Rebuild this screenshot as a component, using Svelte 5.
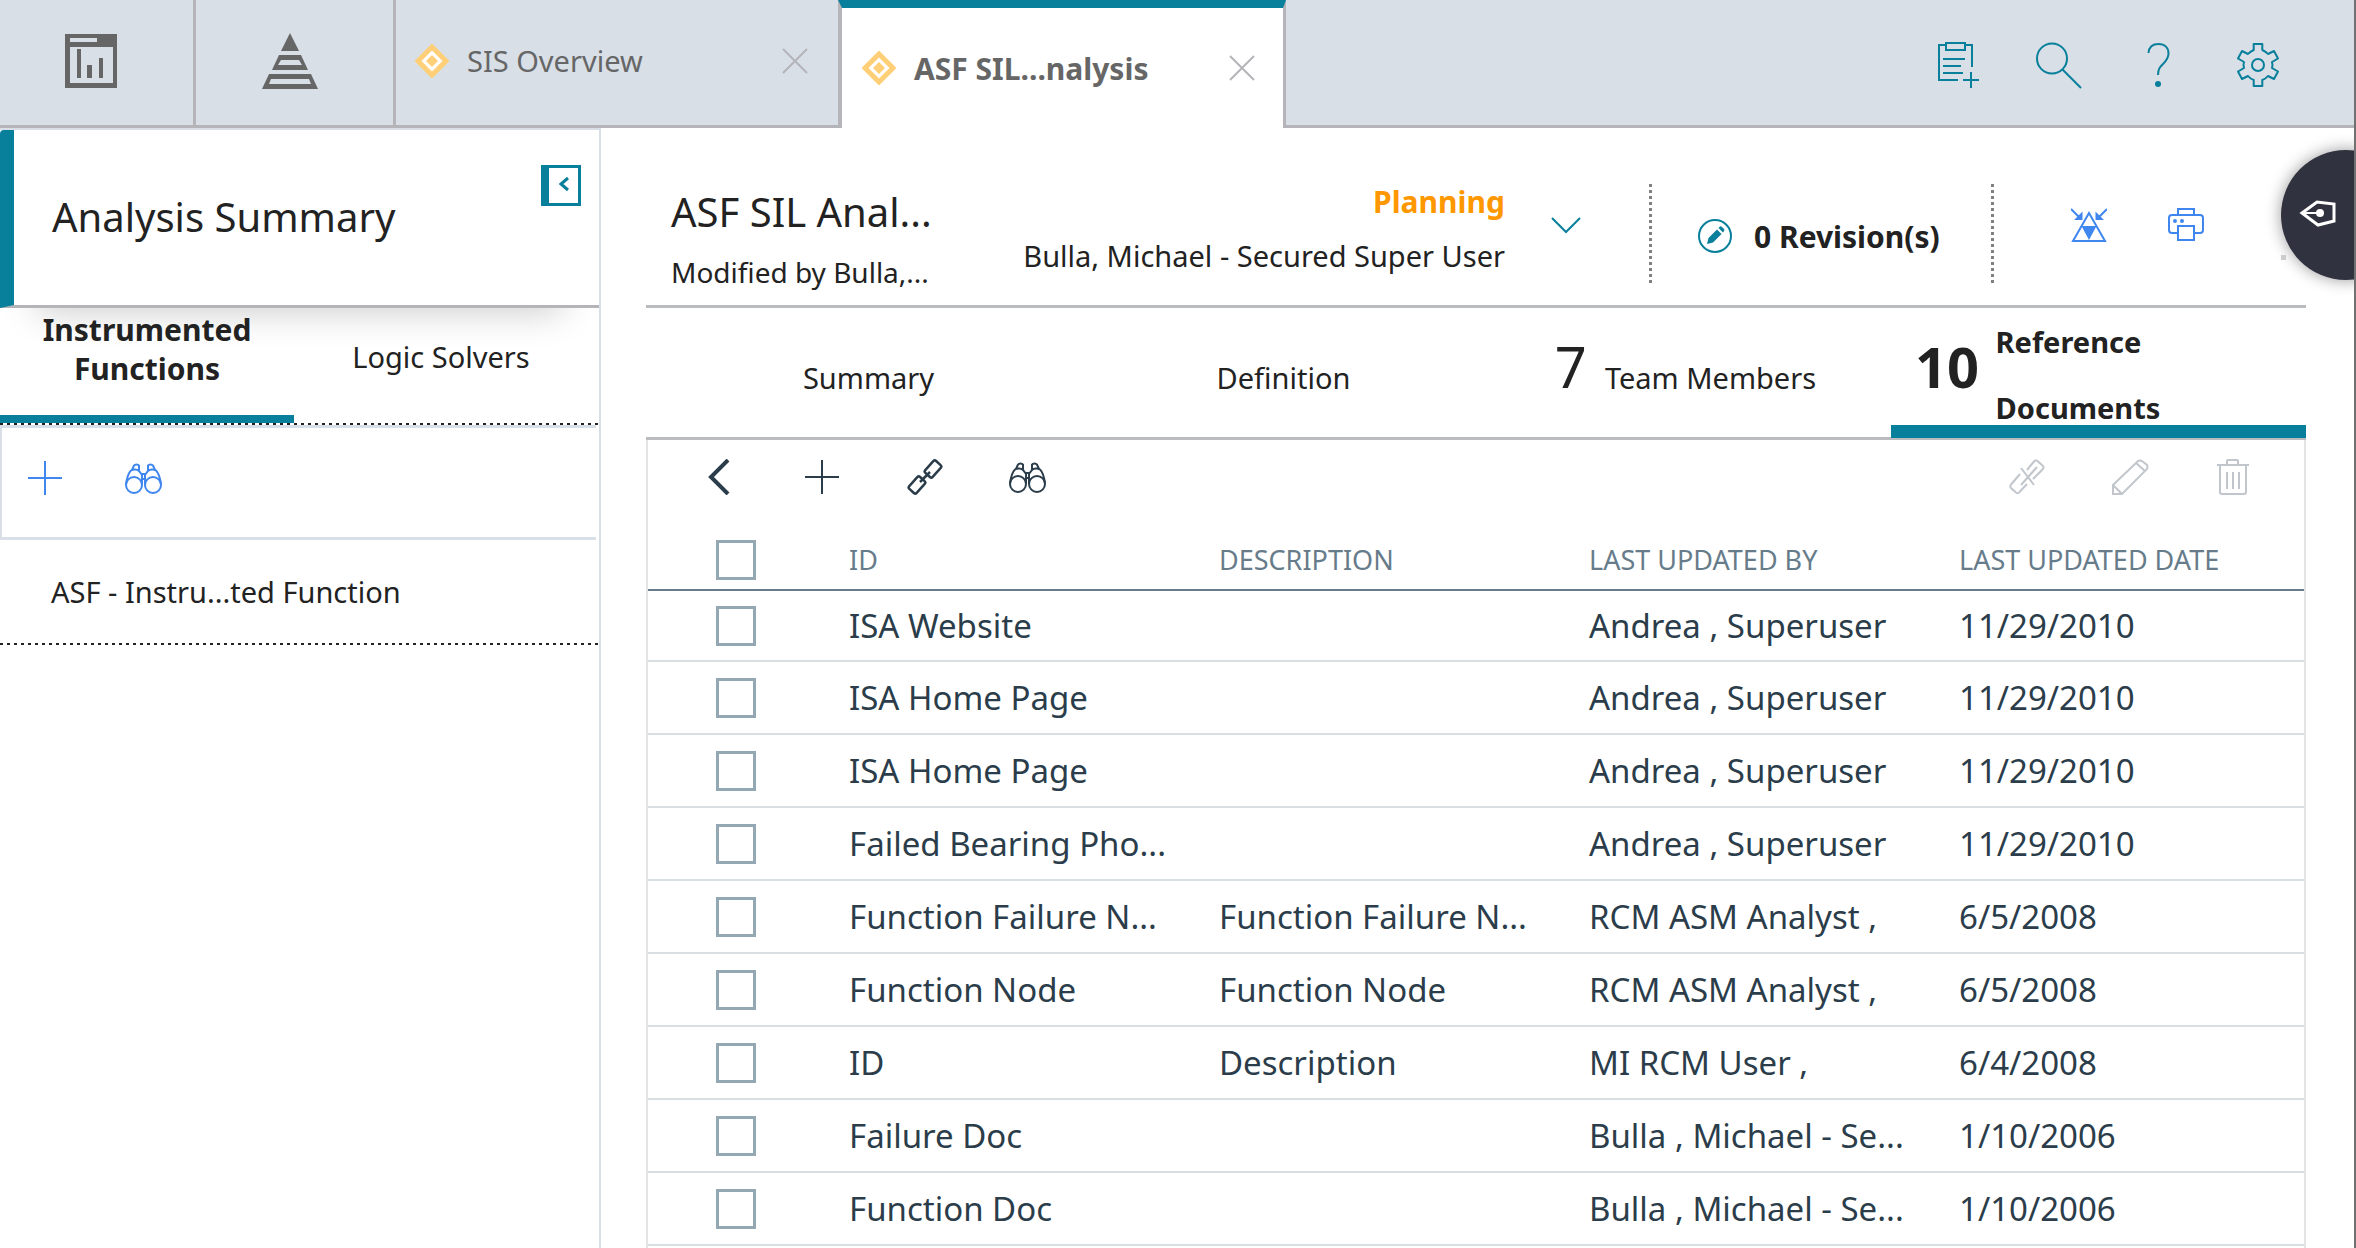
<script lang="ts">
  type Doc = { id: string; description: string; by: string; date: string };

  const docs: Doc[] = [
    { id: 'ISA Website', description: '', by: 'Andrea , Superuser', date: '11/29/2010' },
    { id: 'ISA Home Page', description: '', by: 'Andrea , Superuser', date: '11/29/2010' },
    { id: 'ISA Home Page', description: '', by: 'Andrea , Superuser', date: '11/29/2010' },
    { id: 'Failed Bearing Pho...', description: '', by: 'Andrea , Superuser', date: '11/29/2010' },
    { id: 'Function Failure N...', description: 'Function Failure N...', by: 'RCM ASM Analyst ,', date: '6/5/2008' },
    { id: 'Function Node', description: 'Function Node', by: 'RCM ASM Analyst ,', date: '6/5/2008' },
    { id: 'ID', description: 'Description', by: 'MI RCM User ,', date: '6/4/2008' },
    { id: 'Failure Doc', description: '', by: 'Bulla , Michael - Se...', date: '1/10/2006' },
    { id: 'Function Doc', description: '', by: 'Bulla , Michael - Se...', date: '1/10/2006' }
  ];

  const tabs = [
    { label: 'Summary', count: '' },
    { label: 'Definition', count: '' },
    { label: 'Team Members', count: '7' },
    { label: 'Reference Documents', count: '10' }
  ];

  let activeTab = $state(3);
  let sideTab = $state(0);
  let checked = $state(docs.map(() => false));

  function toggleAll(e: Event) {
    const on = (e.currentTarget as HTMLInputElement).checked;
    checked = docs.map(() => on);
  }
</script>

{#snippet diamond()}
  <svg width="34" height="34" viewBox="0 0 34 34" aria-hidden="true">
    <path d="M17 3 31 17 17 31 3 17Z" fill="#fff" stroke="#ffcf78" stroke-width="5" />
    <path d="M17 11 23 17 17 23 11 17Z" fill="#ffcf78" />
  </svg>
{/snippet}

{#snippet cross()}
  <svg width="26" height="26" viewBox="0 0 26 26" aria-hidden="true">
    <path d="M1 1 25 25M25 1 1 25" fill="none" stroke="#b4b4b9" stroke-width="2" />
  </svg>
{/snippet}

{#snippet plus()}
  <svg width="34" height="34" viewBox="0 0 34 34" aria-hidden="true">
    <path d="M17 0V34M0 17H34" fill="none" stroke="currentColor" stroke-width="2" />
  </svg>
{/snippet}

{#snippet binoculars()}
  <svg width="37" height="31" viewBox="0 0 37 31" fill="none" stroke="currentColor" stroke-width="2" aria-hidden="true">
    <circle cx="9" cy="22" r="8" />
    <circle cx="28" cy="22" r="8" />
    <path d="M1 21C2 15 3 10 6 7.500C8 6 12 6 14 8L17 12V22M36 21C35 15 34 10 31 7.500C29 6 25 6 23 8L20 12V22" />
    <path d="M7 7 9 2.500C10 1 13 1 14 2.500V8M30 7 28 2.500C27 1 24 1 23 2.500V8M16 11H21M16 16H21" />
  </svg>
{/snippet}

<div class="shell">
  <header class="topbar">
    <button class="icon-tab home" aria-label="Dashboard">
      <svg width="52" height="54" viewBox="0 0 52 54" fill="#666" aria-hidden="true">
        <path fill-rule="evenodd" d="M0 0H52V54H0ZM5 4V8H32V4ZM5 13V49H48V13Z" />
        <path d="M12 15H16V44H12ZM22 31H27V44H22ZM34 24H38V44H34Z" />
      </svg>
    </button>
    <button class="icon-tab" aria-label="Hierarchy">
      <svg width="56" height="56" viewBox="0 0 56 56" fill="#666" fill-rule="evenodd" aria-hidden="true">
        <path d="M28 0 37 18H19Z" />
        <path d="M17 22H39L46 37H10ZM19 27 16 32H40L37 27Z" />
        <path d="M7 41H49L56 56H0ZM9 46 7 51H49L47 46Z" />
      </svg>
    </button>
    <div class="page-tab">
      {@render diamond()}
      <a href="#sis">SIS Overview</a>
      <button class="close" aria-label="Close SIS Overview">{@render cross()}</button>
    </div>
    <div class="page-tab current">
      {@render diamond()}
      <a href="#analysis">ASF SIL...nalysis</a>
      <button class="close" aria-label="Close analysis">{@render cross()}</button>
    </div>
    <div class="top-actions">
      <button aria-label="Add to clipboard">
        <svg width="42" height="46" viewBox="0 0 42 46" aria-hidden="true">
          <path d="M8 3H2V38H21M29 3H35V25M9 1H28V8H9ZM6 17H28M6 24H24M6 31H26M34 30V46M26 38H42" />
        </svg>
      </button>
      <button aria-label="Search">
        <svg width="47" height="47" viewBox="0 0 47 47" aria-hidden="true">
          <circle cx="17" cy="16.500" r="15" />
          <path d="M27.500 27.500 46 46" />
        </svg>
      </button>
      <button aria-label="Help">
        <svg width="23" height="45" viewBox="0 0 23 45" aria-hidden="true">
          <path d="M1.500 10C2 4 6 1 11.500 1C18 1 21.500 5 21.500 10.500C21.500 15 19 18 16 21C13 24 11 26 11 32" />
          <circle class="dot" cx="11" cy="41" r="3" />
        </svg>
      </button>
      <button aria-label="Settings">
        <svg width="44" height="44" viewBox="-22 -22 44 44" stroke-linejoin="round" aria-hidden="true">
          <path d="M-4.300 -21H4.300V-15Q8 -13.500 10 -11L16 -14 20 -6.500 14 -3Q15 0 14 3L20 6.500 16 14 10 11Q8 13.500 4.300 15V21H-4.300V15Q-8 13.500 -10 11L-16 14 -20 6.500 -14 3Q-15 0 -14 -3L-20 -6.500 -16 -14 -10 -11Q-8 -13.500 -4.300 -15Z" />
          <circle r="6" />
        </svg>
      </button>
    </div>
  </header>

  <div class="body">
    <aside class="sidebar">
      <div class="side-head">
        <h2>Analysis Summary</h2>
        <button class="collapse" aria-label="Collapse panel">
          <svg width="40" height="41" viewBox="0 0 40 41" fill="none" aria-hidden="true">
            <path d="M1.500 1.500H38.500V39.500H1.500Z" stroke="#087f9b" stroke-width="3" />
            <path d="M0 0H8V41H0Z" fill="#087f9b" />
            <path d="M27 13 20 19 27 25" stroke="#087f9b" stroke-width="3" />
          </svg>
        </button>
      </div>
      <div class="side-tabs" role="tablist">
        <button role="tab" aria-selected={sideTab === 0} class:active={sideTab === 0} onclick={() => (sideTab = 0)}>Instrumented Functions</button>
        <button role="tab" aria-selected={sideTab === 1} class:active={sideTab === 1} onclick={() => (sideTab = 1)}>Logic Solvers</button>
      </div>
      <div class="dots"></div>
      <div class="side-tools">
        <button aria-label="Add function">{@render plus()}</button>
        <button aria-label="Find function">{@render binoculars()}</button>
      </div>
      <a class="side-item" href="#function">ASF - Instru...ted Function</a>
      <div class="dots"></div>
    </aside>

    <main>
      <section class="summary">
        <div class="title">
          <h1>ASF SIL Anal...</h1>
          <p>Modified by Bulla,...</p>
        </div>
        <div class="status">
          <strong>Planning</strong>
          <p>Bulla, Michael - Secured Super User</p>
        </div>
        <button class="expand" aria-label="Change state">
          <svg width="30" height="17" viewBox="0 0 30 17" fill="none" aria-hidden="true">
            <path d="M1 1 15 15 29 1" stroke="#087f9b" stroke-width="2" />
          </svg>
        </button>
        <div class="rule"></div>
        <button class="revisions">
          <svg width="34" height="34" viewBox="0 0 34 34" aria-hidden="true">
            <circle cx="17" cy="17" r="16" fill="none" stroke="#087f9b" stroke-width="2" />
            <path d="M9 25 10.500 19 19 10.500 23.500 15 15 23.500ZM20.500 9 22 7.500Q23 7 24 8L26 10Q27 11 26 12L25 13.500Z" fill="#087f9b" />
          </svg>
          0 Revision(s)
        </button>
        <div class="rule"></div>
        <div class="tools">
          <button aria-label="Hierarchy options">
            <svg width="36" height="35" viewBox="0 0 36 35" fill="none" stroke="#3f87ef" stroke-width="2" aria-hidden="true">
              <path d="M18 5 34 33H2Z" />
              <path d="M10.500 18H25.500L18 32Z" fill="#3f87ef" stroke="none" />
              <path d="M0 1 8 9M36 1 28 9" />
              <path d="M11.500 3.500V12H3ZM24.500 3.500V12H33Z" fill="#3f87ef" stroke="none" />
            </svg>
          </button>
          <button aria-label="Print">
            <svg width="36" height="34" viewBox="0 0 36 34" fill="none" stroke="#3f87ef" stroke-width="2" aria-hidden="true">
              <path d="M10 7V1H26V7M10 25H4Q1 25 1 22V10Q1 7 4 7H32Q35 7 35 10V22Q35 25 32 25H26" />
              <path d="M10 18H26V32H10Z" />
              <path d="M7 11A2 2 0 1 1 7 15 2 2 0 1 1 7 11M14 11A2 2 0 1 1 14 15 2 2 0 1 1 14 11" fill="#3f87ef" stroke="none" />
            </svg>
          </button>
        </div>
      </section>

      <div class="tabs" role="tablist">
        {#each tabs as tab, i}
          <button role="tab" aria-selected={activeTab === i} class:active={activeTab === i} onclick={() => (activeTab = i)}>
            <span class="count" class:filled={tab.count}>{tab.count}</span>
            <span class="label">{tab.label}</span>
          </button>
        {/each}
      </div>

      <section class="grid">
        <div class="toolbar">
          <button aria-label="Back">
            <svg width="22" height="36" viewBox="0 0 22 36" fill="none" aria-hidden="true">
              <path d="M20 1 3 18 20 35" stroke="currentColor" stroke-width="4" />
            </svg>
          </button>
          <button aria-label="Add document">{@render plus()}</button>
          <button aria-label="Link document">
            <svg width="36" height="36" viewBox="0 0 36 36" fill="none" stroke="currentColor" stroke-width="2.500" aria-hidden="true">
              <rect x="-8" y="-5" width="16" height="10" rx="2" transform="translate(26 10) rotate(-48)" />
              <rect x="-8" y="-5" width="16" height="10" rx="2" transform="translate(10 26) rotate(-48)" />
              <path d="M13 23 23 13" />
            </svg>
          </button>
          <button aria-label="Find document">{@render binoculars()}</button>
          <span class="gap"></span>
          <button class="off" aria-label="Unlink">
            <svg width="36" height="36" viewBox="0 0 36 36" fill="none" stroke="currentColor" stroke-width="2" aria-hidden="true">
              <path d="M18 11 25 2.500Q27 0 29 2.500L33.500 6.500Q35.500 8 33.500 10.500L24 20M11 15 2.500 25Q0 27 2.500 29.500L6.500 33Q8.500 35.500 10.500 33L18 25" />
              <path d="M12 9 25 26M12 26 28 8" />
            </svg>
          </button>
          <button class="off" aria-label="Edit">
            <svg width="38" height="36" viewBox="0 0 38 36" fill="none" stroke="currentColor" stroke-width="2" aria-hidden="true">
              <path d="M2 35V26L27 2Q29 1 31 2L36 6Q37 8 36 10L11 35ZM2 26 11 35M25 4 34 12" />
            </svg>
          </button>
          <button class="off" aria-label="Delete">
            <svg width="32" height="36" viewBox="0 0 32 36" fill="none" stroke="currentColor" stroke-width="2" aria-hidden="true">
              <path d="M0 6H32M10 6V2Q10 1 11 1H20Q21 1 21 2V6M3 6V33Q3 35 5 35H27Q29 35 29 33V6M10 13V30M16 13V30M22 13V30" />
            </svg>
          </button>
        </div>

        <table>
          <thead>
            <tr>
              <th class="pick"><input type="checkbox" aria-label="Select all" onchange={toggleAll} /></th>
              <th>ID</th>
              <th>DESCRIPTION</th>
              <th>LAST UPDATED BY</th>
              <th>LAST UPDATED DATE</th>
            </tr>
          </thead>
          <tbody>
            {#each docs as doc, i}
              <tr>
                <td class="pick"><input type="checkbox" aria-label={doc.id} bind:checked={checked[i]} /></td>
                <td>{doc.id}</td>
                <td>{doc.description}</td>
                <td>{doc.by}</td>
                <td>{doc.date}</td>
              </tr>
            {/each}
          </tbody>
        </table>
      </section>
    </main>
  </div>

  <button class="pen" aria-label="Annotate">
    <svg width="38" height="29" viewBox="0 0 38 29" fill="none" stroke="#fff" stroke-width="3" aria-hidden="true">
      <path d="M3 14 18 3 35 5V22L19 26Z" />
      <path d="M3 14H20" stroke-width="2" />
      <circle cx="21" cy="14" r="4" fill="#fff" stroke="none" />
    </svg>
  </button>
  <span class="speck"></span>
</div>

<style>
  :global(body) { margin: 0; background: #fff; }
  .shell {
    position: relative;
    box-sizing: border-box;
    min-height: 100vh;
    display: flex;
    flex-direction: column;
    border-right: 2px solid #717171;
    overflow: hidden;
    font-family: 'Noto Sans', 'Open Sans', sans-serif;
    font-size: 29px;
    color: #222;
  }
  button { margin: 0; padding: 0; border: 0; background: none; font: inherit; color: inherit; cursor: pointer; }
  a { color: inherit; text-decoration: none; }
  h1, h2, p { margin: 0; font-weight: 400; }
  svg { display: block; flex: none; }

  .topbar { display: flex; height: 128px; background: #d8dfe6; color: #666; }
  .topbar > * { box-sizing: border-box; border-bottom: 3px solid #b4b4b9; }
  .icon-tab { width: 200px; display: flex; align-items: center; justify-content: center; border-right: 3px solid #b4b4b9; padding: 0 10px 4px 0; }
  .icon-tab.home { width: 196px; padding-right: 12px; }
  .page-tab { width: 442px; display: flex; align-items: center; padding: 0 30px 4px 19px; }
  .page-tab a { flex: 1; margin-left: 18px; }
  .page-tab.current { width: 448px; padding: 0 28px 0 20px; background: #fff; border: solid #b4b4b9; border-width: 8px 3px 0 4px; border-top-color: #087f9b; font-size: 30px; font-weight: 700; }
  .top-actions { flex: 1; display: flex; justify-content: flex-end; align-items: center; padding: 5px 46px 0 0; }
  .top-actions button { width: 100px; display: flex; justify-content: center; }
  .top-actions svg { fill: none; stroke: #087f9b; stroke-width: 2; }
  .top-actions .dot { fill: #087f9b; stroke: none; }

  .body { flex: 1; display: flex; }
  .sidebar { box-sizing: border-box; width: 601px; flex: none; border: solid #d8dfe6; border-width: 2px 2px 0 0; }
  .side-head { position: relative; box-sizing: border-box; height: 178px; display: flex; justify-content: space-between; border-left: 14px solid #087f9b; border-bottom: 3px solid #b4b4b9; border-radius: 4px 4px 0 0; padding: 0 18px 0 38px; box-shadow: 0 40px 36px -36px rgba(0, 0, 0, 0.2); }
  h2 { font-size: 40px; line-height: 174px; }
  .collapse { align-self: flex-start; margin-top: 35px; }
  .side-tabs { display: flex; height: 115px; padding-right: 11px; }
  .side-tabs button { position: relative; box-sizing: border-box; flex: 1; display: flex; justify-content: center; align-items: flex-start; padding: 29px 30px 0; line-height: 39px; border-bottom: 8px solid transparent; }
  .side-tabs .active { padding-top: 2px; font-size: 30px; font-weight: 700; border-color: #087f9b; }
  .dots { height: 2px; background: repeating-linear-gradient(90deg, #222 0 3px, transparent 3px 7px); }
  .side-tools { box-sizing: border-box; height: 115px; margin-right: 3px; display: flex; align-items: flex-start; gap: 12px; border: solid #d8dfe6; border-width: 3px 0 3px 2px; color: #3f87ef; }
  .side-tools button { width: 86px; height: 100px; display: flex; align-items: center; justify-content: center; }
  .side-item { display: block; padding-left: 51px; line-height: 103px; }

  main { flex: 1; min-width: 0; display: flex; flex-direction: column; padding: 0 48px 0 45px; }
  .summary { box-sizing: border-box; height: 180px; display: flex; align-items: flex-start; border-bottom: 3px solid #bbbcc0; padding-top: 56px; white-space: nowrap; }
  .title { padding-left: 25px; }
  h1 { font-size: 40px; line-height: 56px; }
  .title p { font-size: 28px; line-height: 64px; }
  .status { margin-left: auto; margin-top: -9px; text-align: right; line-height: 54px; }
  .status strong { font-size: 30px; color: #ff9800; }
  .expand { width: 122px; height: 82px; margin-right: 22px; display: flex; align-items: center; justify-content: center; }
  .rule { width: 3px; height: 101px; background: repeating-linear-gradient(#808080 0 3px, transparent 3px 6px); }
  .revisions { box-sizing: border-box; width: 339px; height: 104px; padding-left: 46px; display: flex; align-items: center; gap: 22px; font-size: 30px; font-weight: 700; }
  .tools { box-sizing: border-box; width: 312px; height: 82px; padding-left: 46px; display: flex; align-items: center; }
  .tools button { width: 97px; display: flex; justify-content: center; }

  .tabs { display: grid; grid-template-columns: repeat(4, minmax(0, 1fr)); height: 129px; border-bottom: 3px solid #bbbcc0; }
  .tabs button { box-sizing: border-box; min-width: 0; display: flex; align-items: flex-start; justify-content: center; gap: 18px; line-height: 66px; text-align: left; }
  .count { width: 12px; font-size: 56px; margin-top: 25px; text-align: right; }
  .count.filled { width: auto; min-width: 36px; }
  .label { margin-top: 37px; }
  .tabs .active { justify-content: flex-start; height: 130px; padding-left: 24px; border-bottom: 13px solid #087f9b; font-weight: 700; }
  .tabs .active .label { margin-top: 1px; }

  .grid { flex: 1; border: solid #e3e4e6; border-width: 0 2px; }
  .toolbar { box-sizing: border-box; height: 91px; display: flex; align-items: flex-start; padding: 19px 20px 0 19px; color: #2b3d4a; }
  .toolbar button { width: 103px; height: 36px; display: flex; align-items: center; justify-content: center; }
  .toolbar .gap { flex: 1; }
  .toolbar .off { color: #c0c6cb; }

  table { width: 100%; table-layout: fixed; border-spacing: 0; color: #2b3d4a; font-size: 33px; }
  th, td { box-sizing: border-box; height: 73px; padding: 0 0 0 25px; text-align: left; font-weight: 400; line-height: 44px; white-space: nowrap; overflow: hidden; border-bottom: 2px solid #d8dfe3; }
  th { height: 60px; font-size: 27px; color: #677c8a; border-bottom-color: #677c8a; }
  tbody tr:first-child td { height: 71px; }
  .pick { width: 176px; padding-left: 68px; }
  input { appearance: none; display: block; box-sizing: border-box; width: 40px; height: 40px; margin: 0; border: 3px solid #94a8b3; background: #fff; }
  input:checked { background: #94a8b3; }

  .pen { position: absolute; top: 150px; right: -57px; width: 130px; height: 130px; padding-left: 18px; border-radius: 50%; background: #30323f; box-shadow: 0 0 16px rgba(0, 0, 0, 0.4); }
  .pen svg { margin-top: -4px; }
  .speck { position: absolute; top: 255px; right: 68px; width: 5px; height: 5px; background: #ccc; }
</style>
